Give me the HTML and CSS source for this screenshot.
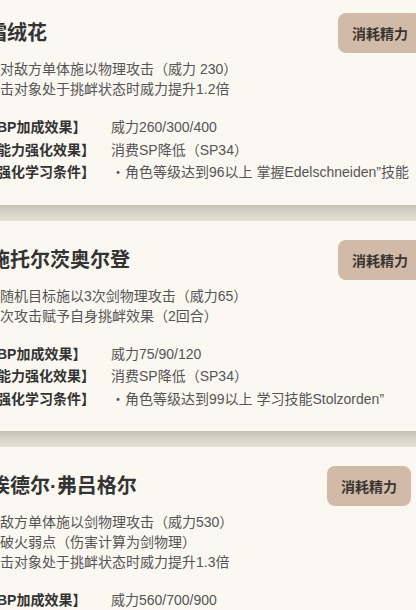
FILE: index.html
```html
<!DOCTYPE html>
<html lang="zh-CN">
<head>
<meta charset="utf-8">
<title>技能列表</title>
<link rel="stylesheet" href="styles.css">
</head>
<body>
<div class="list">
  <section class="card">
    <div class="card-head">
      <h2 class="title title--first">霜绒花</h2>
      <span class="badge">消耗精力</span>
    </div>
    <p class="desc">・对敌方单体施以物理攻击（威力 230）<br>攻击对象处于挑衅状态时威力提升1.2倍</p>
    <div class="stats">
      <span class="label">【BP加成效果】</span><span class="value">威力260/300/400</span>
      <span class="label">【能力强化效果】</span><span class="value">消费SP降低（SP34）</span>
      <span class="label">【强化学习条件】</span><span class="value">・角色等级达到96以上 掌握Edelschneiden”技能</span>
    </div>
  </section>
  <div class="sep"></div>
  <section class="card">
    <div class="card-head">
      <h2 class="title title--shift">施托尔茨奥尔登</h2>
      <span class="badge">消耗精力</span>
    </div>
    <p class="desc">对随机目标施以3次剑物理攻击（威力65）<br>每次攻击赋予自身挑衅效果（2回合）</p>
    <div class="stats">
      <span class="label">【BP加成效果】</span><span class="value">威力75/90/120</span>
      <span class="label">【能力强化效果】</span><span class="value">消费SP降低（SP34）</span>
      <span class="label">【强化学习条件】</span><span class="value">・角色等级达到99以上 学习技能Stolzorden”</span>
    </div>
  </section>
  <div class="sep"></div>
  <section class="card">
    <div class="card-head card-head--narrow">
      <h2 class="title title--shift">埃德尔·弗吕格尔</h2>
      <span class="badge">消耗精力</span>
    </div>
    <p class="desc">对敌方单体施以剑物理攻击（威力530）<br>击破火弱点（伤害计算为剑物理）<br>攻击对象处于挑衅状态时威力提升1.3倍</p>
    <div class="stats">
      <span class="label">【BP加成效果】</span><span class="value">威力560/700/900</span>
      <span class="label">【能力强化效果】</span><span class="value">消费SP降低（SP40）</span>
      <span class="label">【强化学习条件】</span><span class="value">・角色等级达到99以上</span>
    </div>
  </section>
</div>
</body>
</html>
```
FILE: styles.css
```css
html, body {
  margin: 0;
  padding: 0;
}

body {
  background: #e6e0d6;
  overflow: hidden;
  font-family: "Liberation Sans", "Noto Sans CJK SC", sans-serif;
  color: #555;
}

.list {
  width: 468px;
  margin: -6px 0 0 -30px;
  display: flex;
  flex-direction: column;
}

.sep {
  height: 16px;
  background: linear-gradient(#c6bfb3, #d9d2c7 45%, #e5dfd4);
}

.card {
  background: #fbf8f2;
  padding: 19px 16px 21px 16px;
}

.card-head {
  height: 40px;
  display: flex;
  align-items: center;
  justify-content: space-between;
}

.card-head--narrow {
  margin-right: 11px;
}

.title {
  margin: 0;
  font-size: 20px;
  font-weight: 700;
  line-height: 28px;
  color: #333;
}

.title--first {
  margin-left: 1px;
}

.title--shift {
  margin-left: 4px;
}

.badge {
  width: 84px;
  height: 40px;
  box-sizing: border-box;
  display: flex;
  align-items: center;
  justify-content: center;
  background: #d1bba8;
  border-radius: 8px;
  font-size: 14px;
  font-weight: 700;
  color: #3a3531;
}

.desc {
  margin: 6px 0 0;
  font-size: 14px;
  line-height: 20px;
  color: #555;
}

.stats {
  margin: 17px 0 0 -3px;
  display: grid;
  grid-template-columns: 128px auto;
  font-size: 14px;
  line-height: 22.5px;
  white-space: nowrap;
}

.label {
  font-weight: 700;
  color: #333;
}

.value {
  color: #555;
}
```
